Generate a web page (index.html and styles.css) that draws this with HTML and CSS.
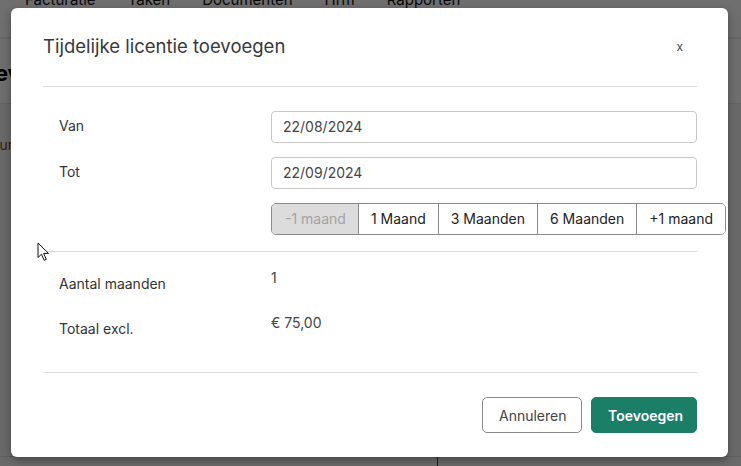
FILE: index.html
```html
<!DOCTYPE html>
<html lang="nl">
<head>
<meta charset="utf-8">
<title>Tijdelijke licentie toevoegen</title>
<link rel="stylesheet" href="styles.css">
</head>
<body>
<div class="page">
  <nav class="topnav">
    <span class="nav-item">Facturatie</span>
    <span class="nav-item">Taken</span>
    <span class="nav-item">Documenten</span>
    <span class="nav-item">Hrm</span>
    <span class="nav-item">Rapporten</span>
  </nav>
  <div class="page-head"><span class="page-title">Dev</span></div>
  <div class="page-body"><span class="page-link">Uur</span></div>
  <div class="page-foot"><div class="foot-cell"></div><div class="foot-rest"></div></div>
</div>
<div class="overlay"></div>

<div class="modal">
  <header class="modal-header">
    <h1 class="modal-title">Tijdelijke licentie toevoegen</h1>
    <span class="modal-close">x</span>
  </header>
  <div class="modal-body">
    <div class="form-row">
      <label class="form-label">Van</label>
      <div class="form-input">22/08/2024</div>
    </div>
    <div class="form-row">
      <label class="form-label">Tot</label>
      <div class="form-input">22/09/2024</div>
    </div>
    <div class="form-row">
      <span></span>
      <div class="btn-group">
        <span class="seg disabled">-1 maand</span>
        <span class="seg">1 Maand</span>
        <span class="seg">3 Maanden</span>
        <span class="seg">6 Maanden</span>
        <span class="seg">+1 maand</span>
      </div>
    </div>
  </div>
  <div class="modal-summary">
    <div class="info-row">
      <span class="info-label">Aantal maanden</span>
      <span class="info-value">1</span>
    </div>
    <div class="info-row">
      <span class="info-label">Totaal excl.</span>
      <span class="info-value">€ 75,00</span>
    </div>
  </div>
  <footer class="modal-footer">
    <button class="btn btn-cancel">Annuleren</button>
    <button class="btn btn-primary">Toevoegen</button>
  </footer>
</div>

<svg class="cursor" width="13" height="20" viewBox="0 0 13 20" xmlns="http://www.w3.org/2000/svg">
  <path d="M1 1 L1 15.5 L4.5 12.2 L7.2 18.3 L9.3 17.4 L6.7 11.4 L11.5 11.4 Z" fill="#fff" stroke="#111" stroke-width="1" stroke-linejoin="round"/>
</svg>
</body>
</html>
```

FILE: styles.css
```css
* { box-sizing: border-box; }
html, body { margin: 0; padding: 0; }
body {
  width: 741px;
  height: 466px;
  overflow: hidden;
  font-family: Inter, "Liberation Sans", Arial, sans-serif;
  font-size: 14px;
  color: #333;
  position: relative;
  background: #f2f2f2;
}

/* background page */
.page { display: flex; flex-direction: column; height: 466px; }
.topnav {
  height: 39px;
  flex-shrink: 0;
  background: #fcfcfc;
  border-bottom: 2px solid #e6e6e6;
  display: flex;
  padding-left: 25px;
  font-size: 15px;
  color: #111;
}
.nav-item { margin-top: -11px; line-height: 22px; margin-right: 32px; }
.page-head {
  height: 65px;
  flex-shrink: 0;
  background: #fafafa;
  border-bottom: 1px solid #e2e2e2;
  display: flex;
  align-items: center;
}
.page-title { font-size: 22px; font-weight: 700; color: #000; margin-left: -21px; margin-top: 4px; }
.page-body { flex: 1; padding-top: 32px; }
.page-link { color: #8b3a1a; margin-left: -11px; }
.page-foot { height: 10px; flex-shrink: 0; display: flex; border-top: 1px solid #d8d8d8; }
.foot-cell { width: 438px; flex-shrink: 0; border-right: 1px solid #444; }
.foot-rest { flex: 1; }

.overlay {
  position: absolute;
  inset: 0;
  background: rgba(0, 0, 0, 0.56);
}

/* modal */
.modal {
  position: absolute;
  left: 11px;
  top: 8px;
  width: 717px;
  height: 449px;
  background: #fff;
  border-radius: 6px;
  box-shadow: 0 3px 8px rgba(0,0,0,0.35);
  padding: 0 31px 0 32px;
  display: flex;
  flex-direction: column;
}
.modal-header {
  display: flex;
  align-items: center;
  justify-content: space-between;
  height: 79px;
  border-bottom: 1px solid #dcdcdc;
  padding-bottom: 2px;
}
.modal-title {
  margin: 0;
  font-size: 18.5px;
  font-weight: 400;
  color: #383838;
  line-height: 24px;
}
.modal-close {
  font-size: 12px;
  color: #444;
  margin-right: 14px;
}

.modal-body {
  padding: 24px 0 16px;
  border-bottom: 1px solid #dcdcdc;
  display: flex;
  flex-direction: column;
  gap: 14px;
}
.form-row {
  display: grid;
  grid-template-columns: 228px 1fr;
  align-items: start;
}
.form-label {
  padding-left: 16px;
  line-height: 20px;
  padding-top: 5px;
  color: #333;
}
.form-input {
  height: 32px;
  border: 1px solid #c8c8c8;
  border-radius: 4px;
  padding: 0 11px;
  line-height: 30px;
  color: #444;
}
.btn-group {
  display: flex;
  width: max-content;
  border: 1px solid #8a8a8a;
  border-radius: 5px;
  overflow: hidden;
}
.seg {
  height: 30px;
  line-height: 30px;
  padding: 0 12px;
  color: #222;
  background: #fff;
  border-left: 1px solid #8a8a8a;
  white-space: nowrap;
}
.seg:first-child { border-left: none; padding: 0 12px 0 13px; }
.seg.disabled { background: #dcdcdc; color: #a3a3a3; }

.modal-summary {
  padding: 16px 0 33px;
  border-bottom: 1px solid #dcdcdc;
  display: flex;
  flex-direction: column;
  gap: 19px;
}
.info-row {
  display: grid;
  grid-template-columns: 228px 1fr;
  line-height: 20px;
}
.info-label { padding-left: 16px; padding-top: 6px; }
.info-value { color: #444; }

.modal-footer {
  display: flex;
  justify-content: flex-end;
  gap: 9px;
  padding-top: 24px;
}
.btn {
  font-family: inherit;
  font-size: 14px;
  height: 36px;
  border-radius: 5px;
  padding: 0 16px;
  cursor: pointer;
}
.btn-cancel {
  background: #fff;
  border: 1px solid #8a8a8a;
  color: #444;
  width: 100px;
}
.btn-primary {
  background: #1b7e66;
  border: 1px solid #1b7e66;
  color: #fff;
  font-weight: 600;
  width: 106px;
}

.cursor {
  position: absolute;
  left: 37px;
  top: 242px;
}
```
